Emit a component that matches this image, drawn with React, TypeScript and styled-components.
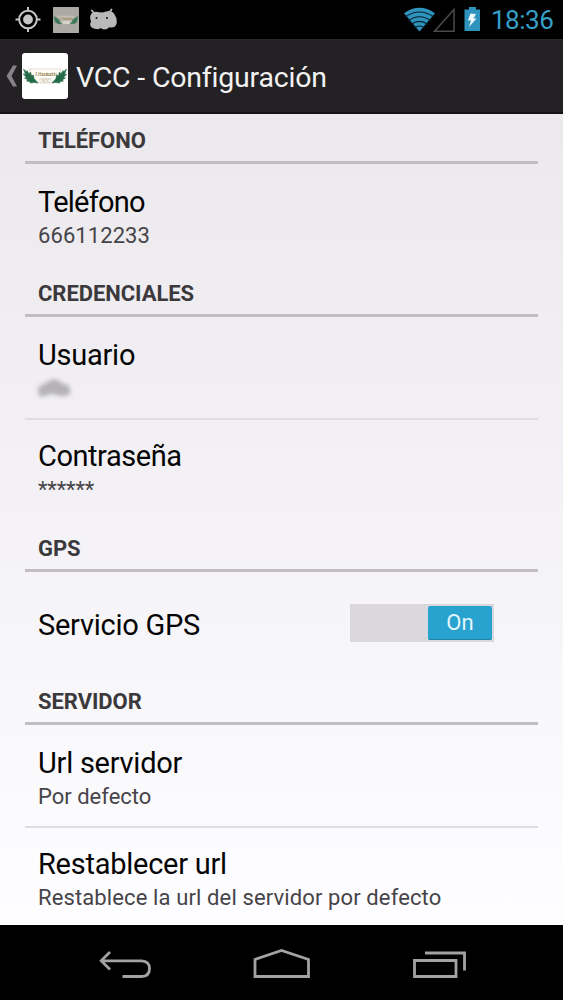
import React from "react";
import styled, { createGlobalStyle } from "styled-components";

const GlobalStyle = createGlobalStyle`
  * { box-sizing: border-box; }
  body { margin: 0; background: #000; font-family: Roboto, "Liberation Sans", sans-serif; }
`;

const Screen = styled.div`
  display: flex;
  flex-direction: column;
  width: 563px;
  height: 1000px;
  overflow: hidden;
  background: #000;
`;

const StatusBar = styled.header`
  display: flex;
  justify-content: space-between;
  flex: none;
  height: 39px;
  padding: 0 8px 0 15px;
`;

const StatusGroup = styled.div`
  display: flex;
  align-items: flex-start;
`;

const Clock = styled.time`
  margin-left: 10px;
  width: 64px;
  white-space: nowrap;
  font-size: 26px;
  line-height: 41px;
  letter-spacing: -0.5px;
  color: #359fc8;
`;

const ActionBar = styled.div`
  display: flex;
  align-items: center;
  flex: none;
  height: 75px;
  padding-left: 6px;
  background: #232123;
  border-top: 1px solid #2b292b;
  border-bottom: 2px solid #151315;
`;

const AppIcon = styled.div`
  display: flex;
  width: 46px;
  height: 46px;
  margin-left: 5px;
  margin-right: 8px;
  border-radius: 3px;
  overflow: hidden;
`;

const Title = styled.h1`
  margin: 0;
  font-size: 28.5px;
  line-height: 40px;
  font-weight: 400;
  letter-spacing: -0.2px;
  color: #f2f2f2;
  padding-top: 3px;
`;

const Settings = styled.main`
  flex: 1;
  min-height: 0;
  overflow: hidden;
  padding: 0 25px;
  background: linear-gradient(#ebe9ec, #f3f1f5 45%, #fefdff);
`;

const Section = styled.section`
  &:first-child { margin-top: -1px; }
`;

const SectionTitle = styled.h2`
  height: 51px;
  margin: 0;
  padding: 15px 13px 0;
  border-bottom: 3px solid #c0bec2;
  font-size: 22px;
  line-height: 26px;
  font-weight: 700;
  letter-spacing: -0.05px;
  color: #3b393c;
`;

const Row = styled.div<{ $divided?: boolean; $compact?: boolean }>`
  height: ${(p) => (p.$divided ? 103 : p.$compact ? 101 : 102)}px;
  padding: ${(p) => (p.$compact ? 17 : 19)}px 44px 0 13px;
  border-bottom: ${(p) => (p.$divided ? "2px solid #dfdde1" : "0")};
`;

const SwitchRow = styled.div`
  display: flex;
  align-items: center;
  justify-content: space-between;
  height: 102px;
  padding: 0 44px 0 13px;
`;

const RowTitle = styled.div<{ $track?: number }>`
  font-size: 29px;
  line-height: 39px;
  letter-spacing: ${(p) => p.$track ?? -0.25}px;
  color: #050505;
`;

const SwitchLabel = styled(RowTitle)`
  padding-top: 4px;
`;

const Summary = styled.div<{ $track?: number }>`
  height: 27px;
  font-size: 22px;
  line-height: 27px;
  letter-spacing: ${(p) => p.$track ?? 0}px;
  color: #464448;
`;

const Redacted = styled.svg`
  display: block;
  filter: blur(2px);
`;

const Switch = styled.div`
  display: flex;
  justify-content: flex-end;
  width: 144px;
  height: 38px;
  padding: 2px;
  background: #dad8dc;
`;

const Thumb = styled.div`
  width: 64px;
  height: 34px;
  border-radius: 2px;
  border-bottom: 1px solid #1f82a6;
  background: #28a3cf;
  color: #e3f5fc;
  font-size: 22px;
  line-height: 34px;
  text-align: center;
`;

const NavBar = styled.nav`
  display: flex;
  flex: none;
  height: 75px;
`;

const NavIcons = styled.svg`
  display: block;
`;

const StatusLogo = styled.div`
  display: flex;
  margin: 7px 9px 0 11px;
`;

function Laurel() {
  return (
    <path
      d="M1.500 16L4.500 19L5 17.500L7 21L8.500 19L9.500 23L11.500 22L12 25.500L16 30L12.500 29.500L8 30L8.500 28.800L4.500 28L6 27L2.500 25L4.500 24.500L1.200 21L3.500 21.500Z"
      fill="#246b47"
      stroke="#246b47"
      strokeWidth=".6"
      strokeLinejoin="round"
    />
  );
}

function Logo({ size, dim }: { size: number; dim?: boolean }) {
  return (
    <svg width={size} height={size} viewBox="0 0 46 46">
      <rect width="46" height="46" rx="1" fill={dim ? "#aaa9a4" : "#fff"} />
      <g opacity={dim ? 0.8 : 1}>
        <path d="M7 16H39L35 26L31 30H15L11 26Z" fill={dim ? "#c5c0b4" : "#fffdf7"} stroke="#ddd0b8" strokeWidth=".7" />
        <Laurel />
        <g transform="translate(46 0) scale(-1 1)"><Laurel /></g>
        <text x="24" y="23" textAnchor="middle" fontFamily="Liberation Serif, serif" fontStyle="italic" fontSize="6" fill="#8b7846" textLength="22">Urbanización</text>
        <rect x="18" y="25.500" width="11" height="4" fill="#fffdf7" stroke="#d0c5b0" strokeWidth=".5" />
        <text x="23.500" y="29" textAnchor="middle" fontFamily="Liberation Serif, serif" fontSize="4" fill="#77745d">VCC</text>
      </g>
    </svg>
  );
}

function NotificationIcons() {
  return (
    <>
      <svg width="27" height="39" viewBox="15 0 27 39">
        <circle cx="28" cy="19.500" r="8.800" fill="none" stroke="#c5c5c5" strokeWidth="2" />
        <circle cx="28" cy="19.500" r="4.900" fill="#c5c5c5" />
        <path d="M28 7v4M28 28v4M15.500 19.500h4M36.500 19.500h4" stroke="#c5c5c5" strokeWidth="2" />
      </svg>
      <StatusLogo><Logo size={26} dim /></StatusLogo>
      <svg width="30" height="39" viewBox="88 0 30 39">
        <path d="M94 13L91.800 10.500M109.500 12.500L111.500 9.500" stroke="#b9b9b9" strokeWidth="1.800" strokeLinecap="round" />
        <path d="M91.500 13.500Q94 11 97.500 12Q102 13 106 11.500Q111 10 114 13.500Q117 17.500 116.800 22Q116.500 26.500 113 27.300Q111 27.800 109 27.300Q107.500 29.500 104.500 29.500Q102.500 29.500 101 28Q99 29.500 96.500 29Q92 28.500 90.500 26Q89.500 24 91 21.500Q89 17 91.500 13.500Z" fill="#b9b9b9" />
        <circle cx="96.500" cy="18" r="1" fill="#111" />
        <circle cx="107" cy="18" r="1" fill="#111" />
      </svg>
    </>
  );
}

function SystemIcons() {
  return (
    <svg width="78" height="39" viewBox="403 0 78 39">
      <path d="M404 13.200Q419.500 2.500 435 13.200L419.500 31.500Z" fill="#2f94bd" />
      <g fill="none" stroke="#03202c" strokeWidth="1.100">
        <path d="M405 17.200Q419.500 6.800 434 17.200" />
        <path d="M408 21Q419.500 12.500 431 21" />
        <path d="M411 24.500Q419.500 18.200 428 24.500" />
        <path d="M414 28Q419.500 24 425 28" />
      </g>
      <path d="M434.500 31.300L454 9.500V31.300Z" fill="none" stroke="#4c4b49" strokeWidth="1.500" />
      <path d="M469 7h7v2.500h4V31H464.500V9.500h4.500Z" fill="#2f94bd" />
      <path d="M470.500 13.500L476 14L473.500 18.500H476.500L469 27L471 20.500H468Z" fill="#edf8fc" />
    </svg>
  );
}

export default function App() {
  return (
    <Screen>
      <GlobalStyle />
      <StatusBar>
        <StatusGroup><NotificationIcons /></StatusGroup>
        <StatusGroup>
          <SystemIcons />
          <Clock>18:36</Clock>
        </StatusGroup>
      </StatusBar>
      <ActionBar>
        <svg width="11" height="24" viewBox="0 0 11 24">
          <path d="M11 1.500H7L.5 12L7 22.500H11L5.500 12Z" fill="#858385" />
        </svg>
        <AppIcon><Logo size={46} /></AppIcon>
        <Title>VCC - Configuración</Title>
      </ActionBar>
      <Settings>
        <Section>
          <SectionTitle>TELÉFONO</SectionTitle>
          <Row>
            <RowTitle $track={-0.75}>Teléfono</RowTitle>
            <Summary $track={0.08}>666112233</Summary>
          </Row>
        </Section>
        <Section>
          <SectionTitle>CREDENCIALES</SectionTitle>
          <Row $divided>
            <RowTitle>Usuario</RowTitle>
            <Summary>
              <Redacted width="34" height="27" viewBox="0 0 34 27">
                <path d="M1 11Q6 10 9 7Q14 3 20 5Q24 9 30 10Q34 14 31 20Q25 22 18 20Q14 18 10 20L2 22Q-1 16 1 11Z" fill="#b4b2b6" />
              </Redacted>
            </Summary>
          </Row>
          <Row $compact>
            <RowTitle $track={-0.45}>Contraseña</RowTitle>
            <Summary $track={-0.1}>******</Summary>
          </Row>
        </Section>
        <Section>
          <SectionTitle>GPS</SectionTitle>
          <SwitchRow>
            <SwitchLabel>Servicio GPS</SwitchLabel>
            <Switch role="switch" aria-checked="true"><Thumb>On</Thumb></Switch>
          </SwitchRow>
        </Section>
        <Section>
          <SectionTitle>SERVIDOR</SectionTitle>
          <Row $divided>
            <RowTitle>Url servidor</RowTitle>
            <Summary>Por defecto</Summary>
          </Row>
          <Row $compact>
            <RowTitle>Restablecer url</RowTitle>
            <Summary $track={0.12}>Restablece la url del servidor por defecto</Summary>
          </Row>
        </Section>
      </Settings>
      <NavBar>
        <NavIcons width="563" height="75" viewBox="0 0 563 75" fill="none" stroke="#a3a1a3" strokeWidth="2.800">
          <path d="M102 35.800H141.500Q149.500 36 149.500 43.500Q149.500 51.500 141.500 51.500H122.500M110 27L101.200 35.800L110 44.500" />
          <path d="M255 51.500V34.500L281.500 25.500L308.500 34.500V51.500Z" />
          <path d="M414.500 35.500H456V51.500H414.500ZM425 28H464.500V45.500" />
        </NavIcons>
      </NavBar>
    </Screen>
  );
}
